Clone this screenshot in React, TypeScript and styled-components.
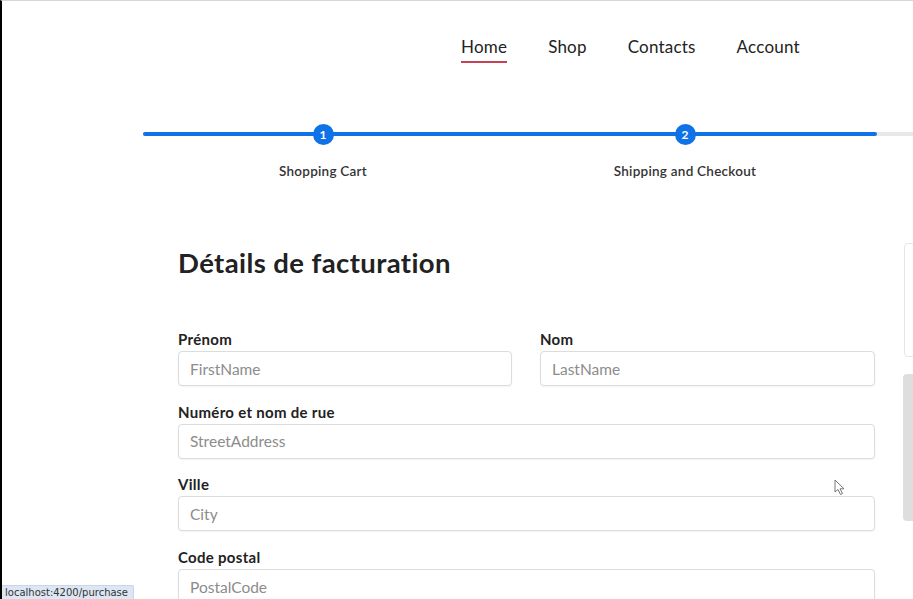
import React from "react";
import styled, { createGlobalStyle } from "styled-components";

const GlobalStyle = createGlobalStyle`
  html, body { margin: 0; padding: 0; background: #fff; overflow: hidden; }
  body { font-family: Lato, "Open Sans", sans-serif; color: #212529; }
  * { box-sizing: border-box; }
`;

const Frame = styled.div`
  position: relative;
  width: 913px;
  height: 599px;
  overflow: hidden;
  border-top: 1px solid #d6d6d6;
  border-left: 2px solid #000;
  background: #fff;
`;

const Header = styled.nav`
  display: flex;
  gap: 41px;
  padding: 36px 0 0 459px;
`;

const NavLink = styled.a<{ $active?: boolean }>`
  font-size: 17px;
  line-height: 20px;
  letter-spacing: 0.2px;
  color: #222;
  text-decoration: none;
  padding-bottom: 4px;
  border-bottom: 2px solid ${(p) => (p.$active ? "#c44356" : "transparent")};
`;

const Stepper = styled.div`
  position: relative;
  margin: 61px 0 0 141px;
`;

const Track = styled.div`
  position: absolute;
  top: 8px;
  left: 0;
  right: -200px;
  height: 4px;
  border-radius: 2px;
  background: #e8e8e8;
`;

const Fill = styled.div`
  height: 100%;
  border-radius: 2px;
  background: #0f72e6;
`;

const Steps = styled.div`
  position: relative;
  display: flex;
  margin-left: -1px;
`;

const Step = styled.div`
  width: 362px;
  display: flex;
  flex-direction: column;
  align-items: center;
  gap: 17px;
`;

const Circle = styled.div`
  width: 21px;
  height: 21px;
  border-radius: 50%;
  background: #0f72e6;
  color: #fff;
  font-size: 12px;
  font-weight: 700;
  display: flex;
  align-items: center;
  justify-content: center;
`;

const StepLabel = styled.div`
  font-size: 13.5px;
  line-height: 18px;
  letter-spacing: 0.25px;
  font-weight: 600;
  color: #333;
`;

const Content = styled.div`
  display: flex;
  align-items: flex-start;
  gap: 29px;
  margin: 63px 0 0 176px;
`;

const Form = styled.form`
  width: 697px;
  flex-shrink: 0;
`;

const Title = styled.h1`
  margin: 4px 0 51px;
  font-size: 27.5px;
  line-height: 32px;
  letter-spacing: 0.4px;
  font-weight: 700;
  color: #222;
`;

const Grid = styled.div`
  display: grid;
  grid-template-columns: 334px 335px;
  column-gap: 28px;
  row-gap: 16.7px;
`;

const Field = styled.div<{ $wide?: boolean }>`
  display: flex;
  flex-direction: column;
  gap: 3px;
  grid-column: ${(p) => (p.$wide ? "1 / -1" : "auto")};
`;

const Label = styled.label`
  font-size: 15px;
  line-height: 18px;
  letter-spacing: 0.3px;
  font-weight: 700;
  color: #222;
`;

const Input = styled.input`
  height: 35px;
  width: 100%;
  border: 1px solid #dcdcdc;
  border-radius: 4px;
  padding: 0 11px;
  font-family: Lato, "Open Sans", sans-serif;
  font-size: 15.5px;
  color: #333;
  box-shadow: 0 1px 2px rgba(0, 0, 0, 0.05);
  outline: none;
  &::placeholder { color: #8c8c8c; }
`;

const Aside = styled.aside`
  display: flex;
  flex-direction: column;
  gap: 17px;
  width: 220px;
  flex-shrink: 0;
`;

const SummaryCard = styled.div`
  height: 114px;
  border: 1px solid #e6e6e6;
  border-radius: 4px;
`;

const GreyCard = styled.div`
  height: 147px;
  margin-left: -1px;
  border-radius: 4px;
  background: #dedede;
`;

const StatusBar = styled.div`
  position: absolute;
  left: -2px;
  bottom: 0;
  width: 134px;
  height: 14px;
  padding-left: 5px;
  background: #dce7f3;
  border-top: 1px solid #c8d6e6;
  border-right: 1px solid #c8d6e6;
  border-top-right-radius: 2px;
  font-family: "DejaVu Sans", sans-serif;
  font-size: 10px;
  line-height: 13px;
  color: #333;
  white-space: nowrap;
  overflow: hidden;
`;

const Cursor = styled.svg`
  position: absolute;
  left: 832px;
  top: 478px;
`;

export default function App() {
  return (
    <>
      <GlobalStyle />
      <Frame>
        <Header>
          <NavLink $active>Home</NavLink>
          <NavLink>Shop</NavLink>
          <NavLink>Contacts</NavLink>
          <NavLink>Account</NavLink>
        </Header>

        <Stepper>
          <Track>
            <Fill style={{ width: "734px" }} />
          </Track>
          <Steps>
            <Step>
              <Circle>1</Circle>
              <StepLabel>Shopping Cart</StepLabel>
            </Step>
            <Step>
              <Circle>2</Circle>
              <StepLabel>Shipping and Checkout</StepLabel>
            </Step>
          </Steps>
        </Stepper>

        <Content>
          <Form>
            <Title>Détails de facturation</Title>
            <Grid>
              <Field>
                <Label>Prénom</Label>
                <Input placeholder="FirstName" />
              </Field>
              <Field>
                <Label>Nom</Label>
                <Input placeholder="LastName" />
              </Field>
              <Field $wide>
                <Label>Numéro et nom de rue</Label>
                <Input placeholder="StreetAddress" />
              </Field>
              <Field $wide>
                <Label>Ville</Label>
                <Input placeholder="City" />
              </Field>
              <Field $wide>
                <Label>Code postal</Label>
                <Input placeholder="PostalCode" />
              </Field>
            </Grid>
          </Form>
          <Aside>
            <SummaryCard />
            <GreyCard />
          </Aside>
        </Content>

        <Cursor width="12" height="17" viewBox="0 0 12 17">
          <path d="M1 1 L1 13 L4 10.5 L6.5 15.5 L8.5 14.5 L6 9.8 L10 9.8 Z" fill="#fff" stroke="#777" strokeWidth="1" strokeLinejoin="round" />
        </Cursor>

        <StatusBar>localhost:4200/purchase</StatusBar>
      </Frame>
    </>
  );
}
